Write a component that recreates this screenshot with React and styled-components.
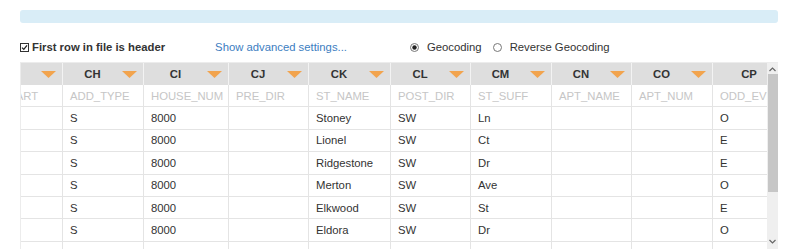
import React, { useEffect, useRef } from 'react'
import styled, { createGlobalStyle } from 'styled-components'

const GlobalStyle = createGlobalStyle`
  body {
    margin: 0;
    background: #ffffff;
    font-family: "Liberation Sans", Arial, sans-serif;
    font-size: 11.3px;
    color: #333333;
  }
`;

const Page = styled.div`
  padding: 10px 22px 0 20px;
`;

const InfoBar = styled.div`
  height: 13px;
  background: #d9edf7;
  border-radius: 3px;
`;

const Controls = styled.div`
  display: flex;
  align-items: center;
  height: 16px;
  margin-top: 16px;
`;

const HeaderToggle = styled.label`
  display: flex;
  align-items: center;
  gap: 3px;
  font-weight: bold;
`;

const AdvancedLink = styled.a`
  margin-left: 50px;
  color: #3c7dbf;
  text-decoration: none;
`;

const RadioGroup = styled.div`
  display: flex;
  align-items: center;
  margin-left: 63px;
`;

const RadioOption = styled.span`
  display: flex;
  align-items: center;
  gap: 8px;
  margin-right: 11px;
`;

const GridFrame = styled.div`
  display: flex;
  margin-top: 7px;
  height: 186px;
  border-top: 1px solid #ececec;
  border-left: 1px solid #ececec;
`;

const Viewport = styled.div`
  flex: 1;
  min-width: 0;
  overflow: hidden;
`;

const Table = styled.table`
  width: ${p => p.$w}px;
  border-collapse: collapse;
  table-layout: fixed;
  white-space: nowrap;
`;

const HeadCell = styled.th`
  height: 22px;
  padding: 0;
  background: #dedede;
  border-right: 1px solid #f3f3f3;
  font-weight: bold;
  color: #333333;
`;

const HeadInner = styled.div`
  display: flex;
  align-items: center;
`;

const HeadLabel = styled.span`
  flex: 1;
  text-align: center;
`;

const Caret = styled.svg`
  width: 15px;
  height: 7px;
  margin-right: 6px;
  flex: none;
`;

const Cell = styled.td`
  height: 21.4px;
  padding: 0 7px;
  border: 1px solid #e4e4e4;
  border-top: none;
  overflow: hidden;
  color: ${p => (p.$muted ? '#c6c6c6' : '#333333')};
  text-transform: ${p => (p.$muted ? 'uppercase' : 'none')};
`;

const ScrollBar = styled.div`
  width: 11px;
  flex: none;
  background: #efefef;
  display: flex;
  flex-direction: column;
  align-items: center;
`;

const Arrow = styled.svg`
  width: 7px;
  height: 5px;
  margin: ${p => (p.$down ? 'auto 0 5px' : '4px 0 2px')};
`;

const Thumb = styled.div`
  width: 10px;
  height: 118px;
  background: #c6c6c6;
`;

const columns = [
  { id: 'CG', w: 81, name: 'T_START' },
  { id: 'CH', w: 81, name: 'ADD_TYPE' },
  { id: 'CI', w: 85, name: 'HOUSE_NUM' },
  { id: 'CJ', w: 80, name: 'PRE_DIR' },
  { id: 'CK', w: 82, name: 'ST_NAME' },
  { id: 'CL', w: 80, name: 'POST_DIR' },
  { id: 'CM', w: 81, name: 'ST_SUFF' },
  { id: 'CN', w: 80, name: 'APT_NAME' },
  { id: 'CO', w: 81, name: 'APT_NUM' },
  { id: 'CP', w: 94, name: 'ODD_EVEN' },
]

const tableWidth = columns.reduce((s, c) => s + c.w, 0)

const rows = [
  ['', 'S', '8000', '', 'Stoney', 'SW', 'Ln', '', '', 'O'],
  ['', 'S', '8000', '', 'Lionel', 'SW', 'Ct', '', '', 'E'],
  ['', 'S', '8000', '', 'Ridgestone', 'SW', 'Dr', '', '', 'E'],
  ['', 'S', '8000', '', 'Merton', 'SW', 'Ave', '', '', 'O'],
  ['', 'S', '8000', '', 'Elkwood', 'SW', 'St', '', '', 'E'],
  ['', 'S', '8000', '', 'Eldora', 'SW', 'Dr', '', '', 'O'],
  ['', '', '', '', '', '', '', '', '', ''],
]

function CheckIcon() {
  return (
    <svg width="9" height="9" viewBox="0 0 9 9">
      <rect x="0.5" y="0.5" width="8" height="8" fill="#fff" stroke="#333" />
      <path d="M2 4.6 L3.8 6.4 L7 2.4" fill="none" stroke="#222" strokeWidth="1.3" />
    </svg>
  )
}

function RadioIcon({ on }) {
  return (
    <svg width="9" height="9" viewBox="0 0 9 9">
      <circle cx="4.5" cy="4.5" r="4" fill="#fff" stroke="#777" />
      {on && <circle cx="4.5" cy="4.5" r="2.2" fill="#222" />}
    </svg>
  )
}

export default function App() {
  const viewRef = useRef(null)

  // the grid is shown scrolled a little to the right
  useEffect(() => {
    if (viewRef.current) viewRef.current.scrollLeft = 40
  }, [])

  return (
    <Page>
      <GlobalStyle />
      <InfoBar />

      <Controls>
        <HeaderToggle>
          <CheckIcon />
          First row in file is header
        </HeaderToggle>
        <AdvancedLink href="#">Show advanced settings...</AdvancedLink>
        <RadioGroup>
          <RadioOption><RadioIcon on />Geocoding</RadioOption>
          <RadioOption><RadioIcon />Reverse Geocoding</RadioOption>
        </RadioGroup>
      </Controls>

      <GridFrame>
        <Viewport ref={viewRef}>
          <Table $w={tableWidth}>
            <colgroup>
              {columns.map(c => (
                <col key={c.id} style={{ width: c.w }} />
              ))}
            </colgroup>
            <thead>
              <tr>
                {columns.map(c => (
                  <HeadCell key={c.id}>
                    <HeadInner>
                      <HeadLabel>{c.id}</HeadLabel>
                      <Caret viewBox="0 0 15 7">
                        <path d="M0 0 H15 L7.5 7 Z" fill="#f2a44e" />
                      </Caret>
                    </HeadInner>
                  </HeadCell>
                ))}
              </tr>
            </thead>
            <tbody>
              <tr>
                {columns.map(c => (
                  <Cell key={c.id} $muted>{c.name}</Cell>
                ))}
              </tr>
              {rows.map((r, i) => (
                <tr key={i}>
                  {r.map((v, j) => (
                    <Cell key={j}>{v}</Cell>
                  ))}
                </tr>
              ))}
            </tbody>
          </Table>
        </Viewport>
        <ScrollBar>
          <Arrow viewBox="0 0 7 5">
            <path d="M0.5 4 L3.5 1 L6.5 4" fill="none" stroke="#666" strokeWidth="1.2" />
          </Arrow>
          <Thumb />
          <Arrow $down viewBox="0 0 7 5">
            <path d="M0.5 1 L3.5 4 L6.5 1" fill="none" stroke="#666" strokeWidth="1.2" />
          </Arrow>
        </ScrollBar>
      </GridFrame>
    </Page>
  )
}
